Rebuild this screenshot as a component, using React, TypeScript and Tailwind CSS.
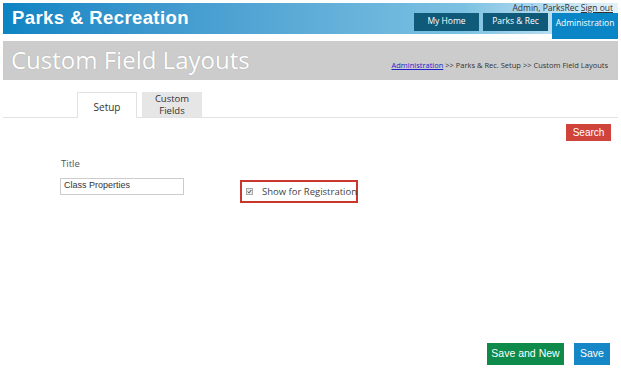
export default function App() {
  return (
    <div className="h-[371px] w-[621px] bg-white flex flex-col px-[3px] pt-[3px] overflow-hidden" style={{ fontFamily: '"Open Sans", sans-serif' }}>
      {/* Header */}
      <div className="h-[31px] flex justify-between bg-gradient-to-r from-[#0a84c3] via-[#7cc1e2] via-75% to-[#e4f2f9] shrink-0">
        <div className="pl-[9px] pt-[6px] text-white font-bold text-[18.5px] tracking-[0.4px] leading-none" style={{ fontFamily: '"Liberation Sans", Arial, sans-serif' }}>
          Parks &amp; Recreation
        </div>
        <div className="flex flex-col items-end">
          <div className="text-[8.5px] leading-none pt-[1px] pr-[5px] text-[#333] h-[12px]">
            Admin, ParksRec <span className="underline">Sign out</span>
          </div>
          <div className="flex gap-[4px] items-start">
            <div className="w-[65px] h-[18px] bg-[#0f5a78] text-white text-[8.5px] flex items-center justify-center">My Home</div>
            <div className="w-[65px] h-[18px] bg-[#0f5a78] text-white text-[8.5px] flex items-center justify-center">Parks &amp; Rec</div>
            <div className="w-[66px] h-[26px] bg-[#0a85c6] text-white text-[8.5px] flex items-start pt-[4px] justify-center">Administration</div>
          </div>
        </div>
      </div>

      {/* Title band */}
      <div className="mt-[7px] h-[39px] bg-[#cccccc] flex items-center justify-between pl-[8px] pr-[10px] shrink-0">
        <div className="text-white text-[24px] leading-none -mt-[2px]" style={{ textShadow: "0 0 1px rgba(0,0,0,0.25)" }}>
          Custom Field Layouts
        </div>
        <div className="text-[7.5px] text-[#333] mt-[11px]">
          <span className="underline text-[#2222cc]">Administration</span> &gt;&gt; Parks &amp; Rec. Setup &gt;&gt; Custom Field Layouts
        </div>
      </div>

      {/* Tabs */}
      <div className="mt-[12px] flex items-end gap-[5px] pl-[74px] border-b border-[#e2e2e2] shrink-0">
        <div className="w-[60px] h-[26px] bg-white border border-b-0 border-[#e2e2e2] -mb-px flex items-center justify-center text-[10px] text-[#333] pt-[3px]">
          Setup
        </div>
        <div className="w-[60px] h-[25px] bg-[#e6e6e6] flex flex-col items-center justify-center text-[9.5px] leading-[12px] text-[#333] overflow-hidden">
          <span>Custom</span>
          <span>Fields</span>
        </div>
      </div>

      {/* Search */}
      <div className="flex justify-end pr-[7px] mt-[6px] shrink-0">
        <div className="w-[45px] h-[17px] bg-[#d0433a] text-white text-[10px] flex items-center justify-center" style={{ fontFamily: '"Liberation Sans", Arial, sans-serif' }}>
          Search
        </div>
      </div>

      {/* Form */}
      <div className="flex items-start pl-[57px] mt-[18px] shrink-0">
        <div className="flex flex-col">
          <div className="text-[9.5px] text-[#555] leading-none pl-[1px]">Title</div>
          <div className="mt-[9px] w-[124px] h-[17px] border border-[#cccccc] text-[9px] text-[#333] flex items-center pl-[3px]" style={{ fontFamily: '"Liberation Sans", Arial, sans-serif' }}>
            Class Properties
          </div>
        </div>
        <div className="ml-[56px] mt-[21px] w-[118px] h-[23px] border-2 border-[#c8362c] flex items-center pl-[4px] gap-[9px] whitespace-nowrap">
          <div className="w-[7px] h-[7px] bg-[#e5e5e5] border border-[#aaa] flex items-center justify-center shrink-0">
            <svg viewBox="0 0 8 8" className="w-[7px] h-[7px]">
              <path d="M1.2 4.2 L3.2 6.2 L6.8 1.6" fill="none" stroke="#333" strokeWidth="1.4" />
            </svg>
          </div>
          <span className="text-[9.5px] text-[#444] leading-none">Show for Registration</span>
        </div>
      </div>

      {/* Bottom buttons */}
      <div className="mt-auto mb-[6px] flex justify-end gap-[10px] pr-[8px]" style={{ fontFamily: '"Liberation Sans", Arial, sans-serif' }}>
        <div className="w-[77px] h-[22px] bg-[#0e8a4a] text-white text-[10.5px] flex items-center justify-center">Save and New</div>
        <div className="w-[36px] h-[22px] bg-[#1587c6] text-white text-[10.5px] flex items-center justify-center">Save</div>
      </div>
    </div>
  );
}
